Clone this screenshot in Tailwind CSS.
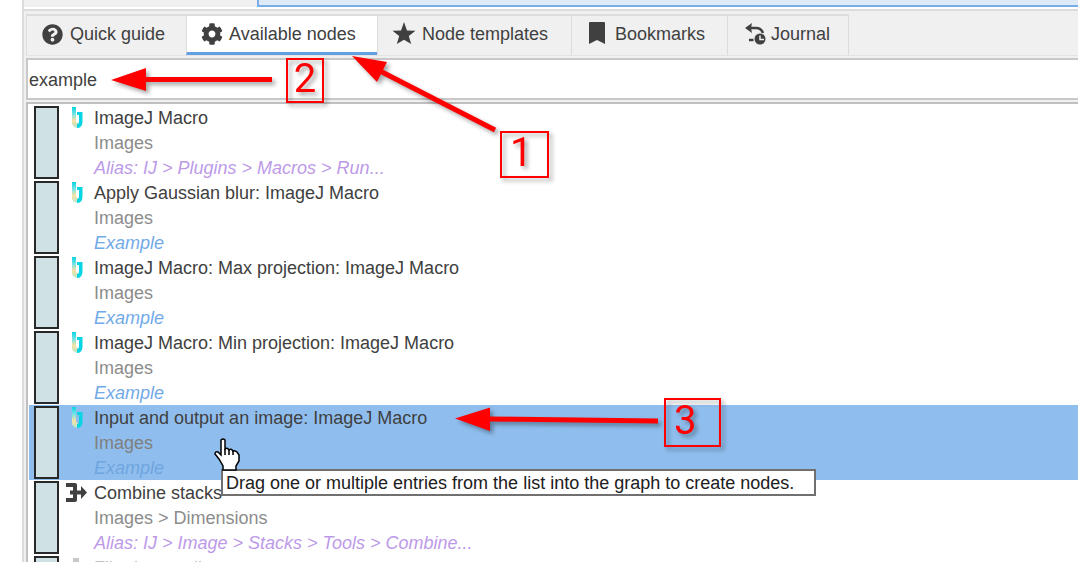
<!DOCTYPE html>
<html lang="en">
<head>
<meta charset="utf-8">
<title>Available nodes</title>
<script src="https://cdn.jsdelivr.net/npm/@tailwindcss/browser@4"></script>
</head>
<body class="relative h-screen overflow-hidden bg-white pl-[22px] font-['Liberation_Sans',Arial,sans-serif] text-lg text-[#404040]">
<svg class="absolute size-0">
  <defs>
    <linearGradient id="ij-grad" x1="0" y1="0" x2="0" y2="1"><stop offset="0" stop-color="#08d5e4"/><stop offset=".35" stop-color="#7be4e4"/><stop offset=".65" stop-color="#f6e3a4"/><stop offset="1" stop-color="#b5e6cf"/></linearGradient>
    <symbol id="ij" viewBox="0 0 12 22">
      <path d="M1 0 H5 V14 Q5 16 7 16 V21 Q0 20 1 14 Z" fill="url(#ij-grad)"/>
      <path d="M6 5 H11.500 V15 Q11 21 6 21 V17 Q8 17 8 14 V8 H6 Z" fill="#08d5e4"/>
    </symbol>
  </defs>
</svg>

<div class="flex h-full flex-col border-l-2 border-[#dcdcdc] bg-[#f0f0f0]">
  <div class="flex h-[9px] shrink-0 border-b-2 border-white pl-[233px]">
    <div class="grow border-b-2 border-l-2 border-[#78aee8] bg-[#dfeaf9]"></div>
  </div>

  <main class="flex min-h-0 grow flex-col border-t-2 border-[#dcdcdc] pt-[3px] pl-[2px]">
    <div role="tablist" class="flex h-[42px] shrink-0 border-b border-[#e4e4e4]">
      <button role="tab" class="flex w-[160px] items-center gap-[7px] border-t-2 border-l border-[#dcdcdc] pb-[3px] pl-[15px] whitespace-nowrap">
        <svg class="size-[21px]" viewBox="0 0 512 512" fill="#404040"><path d="M504 256c0 137-111 248-248 248S8 393 8 256 119 8 256 8s248 111 248 248zM262.700 90c-54.500 0-89.300 23-116.500 63.800-3.500 5.300-2.400 12.400 2.700 16.300l34.700 26.300c5.200 3.900 12.600 3 16.700-2.100 17.900-22.700 30.100-35.800 57.300-35.800 20.400 0 45.700 13.100 45.700 33 0 15-12.400 22.700-32.500 34C247.100 238.500 216 254.900 216 296v4c0 6.600 5.400 12 12 12h56c6.600 0 12-5.400 12-12v-1.300c0-28.500 83.200-29.600 83.200-106.700 0-58-60.200-102-116.500-102zM256 338c-25.400 0-46 20.600-46 46s20.600 46 46 46 46-20.600 46-46-20.600-46-46-46z"/></svg>
        Quick guide
      </button>
      <button role="tab" aria-selected="true" class="flex w-[191px] items-center gap-[6px] border-t-2 border-b-3 border-l border-t-[#dcdcdc] border-b-[#62a0e2] border-l-[#dcdcdc] bg-white pl-[14px] whitespace-nowrap">
        <svg class="size-[22px]" viewBox="0 0 512 512" fill="#404040"><path d="M487.400 315.700l-42.600-24.600c4.300-23.200 4.300-47 0-70.200l42.600-24.600c4.900-2.800 7.100-8.600 5.500-14-11.100-35.600-30-67.800-54.700-94.600-3.800-4.100-10-5.100-14.800-2.300L380.800 110c-17.900-15.400-38.500-27.300-60.800-35.100V25.800c0-5.600-3.900-10.500-9.400-11.700-36.700-8.200-74.300-7.800-109.200 0-5.500 1.200-9.400 6.100-9.400 11.700V75c-22.200 7.900-42.800 19.800-60.800 35.100L88.700 85.500c-4.900-2.800-11-1.900-14.800 2.300-24.700 26.700-43.600 58.900-54.700 94.600-1.700 5.400.6 11.200 5.500 14L67.300 221c-4.300 23.200-4.300 47 0 70.200l-42.600 24.600c-4.900 2.800-7.100 8.600-5.500 14 11.100 35.600 30 67.800 54.700 94.600 3.800 4.100 10 5.100 14.800 2.300l42.600-24.600c17.900 15.400 38.500 27.300 60.800 35.100v49.200c0 5.600 3.900 10.500 9.400 11.700 36.700 8.200 74.300 7.800 109.200 0 5.500-1.200 9.400-6.100 9.400-11.700v-49.200c22.200-7.900 42.800-19.800 60.800-35.100l42.600 24.600c4.900 2.800 11 1.900 14.800-2.300 24.700-26.700 43.600-58.900 54.700-94.600 1.500-5.500-.7-11.300-5.600-14.100zM256 336c-44.100 0-80-35.900-80-80s35.900-80 80-80 80 35.900 80 80-35.900 80-80 80z"/></svg>
        Available nodes
      </button>
      <button role="tab" class="flex w-[194px] items-center gap-[6px] border-t-2 border-l border-[#dcdcdc] pb-[3px] pl-[14px] whitespace-nowrap">
        <svg class="size-[24px]" viewBox="0 0 24 24" fill="#404040"><path d="M12 0l3 8.500 8.500.3-6.700 5.300L19.200 22 12 17.800 4.800 22l2.400-7.900L.5 8.800l8.500-.3z"/></svg>
        Node templates
      </button>
      <button role="tab" class="flex w-[156px] items-center gap-[10px] border-t-2 border-l border-[#dcdcdc] pb-[3px] pl-[17px] whitespace-nowrap">
        <svg class="h-[24px] w-[16px]" viewBox="0 0 16 24" fill="#404040"><path d="M0 1a1 1 0 0 1 1-1h14a1 1 0 0 1 1 1v21l-8-4-8 4z"/></svg>
        Bookmarks
      </button>
      <button role="tab" class="flex w-[122px] items-center gap-[5px] border-x border-t-2 border-[#dcdcdc] pb-[3px] pl-[17px] whitespace-nowrap">
        <svg class="h-[22px] w-[21px]" viewBox="0 0 21 22" fill="none" stroke="#404040"><path d="M4 5h7q5 0 7 5" stroke-width="2.500"/><path d="M0 5l7-5-1 5 1 5z" fill="#404040" stroke="none"/><path d="M4 17h4.500" stroke-width="2.500"/><circle cx="15" cy="16" r="5.500" fill="#404040" stroke="none"/><path d="M15 12.500v4h4" stroke="#f0f0f0" stroke-width="1.500"/></svg>
        Journal
      </button>
    </div>

    <input type="text" aria-label="Search nodes" value="example" class="mt-[2px] h-[42px] w-full shrink-0 border-2 border-r-0 border-[#c8c8c8] bg-white px-px pt-[2px] outline-none">

    <ul class="mt-[2px] min-h-0 grow overflow-hidden border-t-2 border-l-2 border-[#c0c0c0] bg-white pt-px pl-px">
      <li class="flex h-[75px] pt-px pl-[5px]">
        <span class="h-[73px] w-[25px] shrink-0 border-2 border-[#282828] bg-[#cfe1e5]"></span>
        <svg class="mt-px ml-[12px] h-[22px] w-[12px]"><use href="#ij"/></svg>
        <div class="ml-[11px] leading-[25px] whitespace-nowrap"><p>ImageJ Macro</p><p class="text-[#8c8c8c]">Images</p><p class="text-[#bd9ae8] italic">Alias: IJ &gt; Plugins &gt; Macros &gt; Run...</p></div>
      </li>
      <li class="flex h-[75px] pt-px pl-[5px]">
        <span class="h-[73px] w-[25px] shrink-0 border-2 border-[#282828] bg-[#cfe1e5]"></span>
        <svg class="mt-px ml-[12px] h-[22px] w-[12px]"><use href="#ij"/></svg>
        <div class="ml-[11px] leading-[25px] whitespace-nowrap"><p>Apply Gaussian blur: ImageJ Macro</p><p class="text-[#8c8c8c]">Images</p><p class="text-[#72aae8] italic">Example</p></div>
      </li>
      <li class="flex h-[75px] pt-px pl-[5px]">
        <span class="h-[73px] w-[25px] shrink-0 border-2 border-[#282828] bg-[#cfe1e5]"></span>
        <svg class="mt-px ml-[12px] h-[22px] w-[12px]"><use href="#ij"/></svg>
        <div class="ml-[11px] leading-[25px] whitespace-nowrap"><p>ImageJ Macro: Max projection: ImageJ Macro</p><p class="text-[#8c8c8c]">Images</p><p class="text-[#72aae8] italic">Example</p></div>
      </li>
      <li class="flex h-[75px] pt-px pl-[5px]">
        <span class="h-[73px] w-[25px] shrink-0 border-2 border-[#282828] bg-[#cfe1e5]"></span>
        <svg class="mt-px ml-[12px] h-[22px] w-[12px]"><use href="#ij"/></svg>
        <div class="ml-[11px] leading-[25px] whitespace-nowrap"><p>ImageJ Macro: Min projection: ImageJ Macro</p><p class="text-[#8c8c8c]">Images</p><p class="text-[#72aae8] italic">Example</p></div>
      </li>
      <li class="flex h-[75px] bg-[#8fbeee] pt-px pl-[5px]">
        <span class="h-[73px] w-[25px] shrink-0 border-2 border-[#282828] bg-[#cfe1e5]"></span>
        <svg class="mt-px ml-[12px] h-[22px] w-[12px]"><use href="#ij"/></svg>
        <div class="ml-[11px] leading-[25px] whitespace-nowrap"><p>Input and output an image: ImageJ Macro</p><p class="text-[#808080]">Images</p><p class="text-[#6fa5e0] italic">Example</p></div>
      </li>
      <li class="flex h-[75px] pt-px pl-[5px]">
        <span class="h-[73px] w-[25px] shrink-0 border-2 border-[#282828] bg-[#cfe1e5]"></span>
        <svg class="mt-[2px] ml-[7px] h-[19px] w-[21px]" viewBox="0 0 21 19" fill="#404040"><path d="M0 0h9q2 0 2 2v5.500h4V3l6 6.500-6 6.500v-4.500h-4V17q0 2-2 2H0v-4h7v-3.500H4v-4h3V4H0z"/></svg>
        <div class="ml-[7px] leading-[25px] whitespace-nowrap"><p>Combine stacks</p><p class="text-[#8c8c8c]">Images &gt; Dimensions</p><p class="text-[#bd9ae8] italic">Alias: IJ &gt; Image &gt; Stacks &gt; Tools &gt; Combine...</p></div>
      </li>
      <li class="flex h-[75px] pt-px pl-[5px]">
        <span class="h-[73px] w-[25px] shrink-0 border-2 border-[#282828] bg-[#cfe1e5]"></span>
        <svg class="mt-[2px] ml-[12px] h-[22px] w-[12px]" viewBox="0 0 12 22" fill="#c8c8c8"><path d="M2 0h6v22H2z"/></svg>
        <div class="ml-[11px] leading-[25px] whitespace-nowrap text-[#c0c0c0]"><p>Filtering median</p></div>
      </li>
    </ul>
  </main>
</div>

<div role="tooltip" class="absolute top-[469px] left-[221px] min-w-[595px] border-2 border-[#707070] bg-white px-[3px] pt-[2px] leading-[21px] whitespace-nowrap text-[#202020]">Drag one or multiple entries from the list into the graph to create nodes.</div>
<svg class="absolute top-[438px] left-[214px] h-[33px] w-[26px]" viewBox="0 0 26 33" fill="#fff" stroke="#000" stroke-width="1.500"><path d="M7 2q2-2 4 0v9q2-2 4 1 2-2 4 1 1-1 4 1l2 3v6l-3 5v4H9v-4l-4-7-4-5q0-3 3-2l3 3z"/><path d="M11 11v6M15 12v5M19 13v4" fill="none"/></svg>

<svg class="absolute top-0 left-0 h-[562px] w-[1078px] drop-shadow-[3px_3px_2px_rgb(0_0_0/0.35)]" fill="#f00" stroke="#f00">
  <g stroke="none"><path d="M111 80L146 68V91Z"/><path d="M352 56L387 62L377 82Z"/><path d="M455 418.500L490 407.500V431Z"/></g>
  <path d="M144 79.500H272" stroke-width="5"/><path d="M380 71L495 130" stroke-width="5"/><path d="M488 419L658 421" stroke-width="5"/>
</svg>
<div class="absolute top-[58px] left-[286px] flex h-[45px] w-[38px] items-center justify-center border-2 border-[#f00] pb-[4px] font-['Roboto',sans-serif] text-[40px] leading-none text-[#f00] drop-shadow-[3px_3px_2px_rgb(0_0_0/0.35)]">2</div>
<div class="absolute top-[131px] left-[500px] flex h-[47px] w-[49px] items-center border-2 border-[#f00] pb-[4px] pl-[8px] font-['Roboto',sans-serif] text-[40px] leading-none text-[#f00] drop-shadow-[3px_3px_2px_rgb(0_0_0/0.35)]">1</div>
<div class="absolute top-[398px] left-[664px] flex h-[49px] w-[57px] items-center border-2 border-[#f00] pb-[4px] pl-[8px] font-['Roboto',sans-serif] text-[40px] leading-none text-[#f00] drop-shadow-[3px_3px_2px_rgb(0_0_0/0.35)]">3</div>
</body>
</html>
